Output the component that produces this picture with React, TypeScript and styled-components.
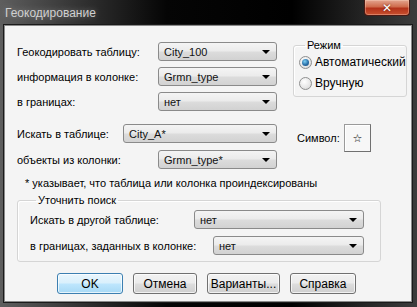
import React from "react";
import styled, { createGlobalStyle } from "styled-components";

const Global = createGlobalStyle`
  html, body { margin: 0; padding: 0; background: #000; overflow: hidden; }
  * { box-sizing: border-box; }
`;

const Window = styled.div`
  width: 417px;
  height: 307px;
  display: flex;
  flex-direction: column;
  background: linear-gradient(90deg, #5e5e5e 0%, #2c2c2c 22%, #050505 40%, #000 70%, #262626 88%, #3c3c3c 100%);
  font-family: "Liberation Sans", Arial, sans-serif;
  font-size: 11px;
  color: #000;
`;

const TitleBar = styled.div`
  height: 25px;
  display: flex;
  align-items: flex-start;
  justify-content: space-between;
  padding: 0 7px 0 5px;
`;

const Title = styled.div`
  margin-top: 6px;
  color: #d0d0d0;
  font-family: "Liberation Sans", Arial, sans-serif;
  font-size: 12px;
  text-shadow: 0 0 6px rgba(255, 255, 255, 0.35);
`;

const CloseBtn = styled.div`
  width: 46px;
  height: 16px;
  border: 1px solid #4a1a14;
  border-top: none;
  border-radius: 0 0 4px 4px;
  background: linear-gradient(180deg, #e3a58f 0%, #cf6b4c 45%, #b3321a 55%, #c9512f 100%);
  box-shadow: inset 0 0 0 1px rgba(255, 220, 200, 0.35);
  display: flex;
  align-items: center;
  justify-content: center;
  color: #fff;
  font-family: "DejaVu Sans", sans-serif;
  font-weight: bold;
  font-size: 12px;
  line-height: 1;
  text-shadow: 0 0 2px #5a1208;
`;

const Panel = styled.div`
  margin: 0 5px 5px 4px;
  flex: 1;
  background: #f4f4f4;
  border: 1px solid #8a8a8a;
  box-shadow: 0 0 0 1px #1a1a1a;
  padding: 16px 0 0 12px;
  display: flex;
  flex-direction: column;
`;

const TopSection = styled.div`
  display: flex;
  align-items: flex-start;
`;

const Column = styled.div<{ $gap: number }>`
  display: flex;
  flex-direction: column;
  gap: ${(p) => p.$gap}px;
`;

const Row = styled.div`
  display: flex;
  align-items: center;
  height: 19px;
`;

const Label = styled.div<{ $w: number }>`
  width: ${(p) => p.$w}px;
  flex: none;
  white-space: nowrap;
`;

const Select = styled.div<{ $w: number }>`
  width: ${(p) => p.$w}px;
  height: 19px;
  flex: none;
  border: 1px solid #8a8a8a;
  border-radius: 3px;
  background: linear-gradient(180deg, #f4f4f4 0%, #ebebeb 48%, #dcdcdc 52%, #d2d2d2 100%);
  display: flex;
  align-items: center;
  justify-content: space-between;
  padding: 0 6px 0 5px;
  font-size: 11px;
  color: #111;
`;

const Arrow = styled.span`
  width: 0;
  height: 0;
  border-left: 4px solid transparent;
  border-right: 4px solid transparent;
  border-top: 4px solid #000;
`;

const Group = styled.fieldset<{ $w: number; $h: number }>`
  margin: 0;
  width: ${(p) => p.$w}px;
  height: ${(p) => p.$h}px;
  border: 1px solid #d5d5d5;
  border-radius: 3px;
  box-shadow: inset 1px 1px 0 #fff;
  padding: 0;
`;

const Legend = styled.legend`
  padding: 0 2px;
  margin-left: 6px;
  font-size: 11px;
  line-height: 12px;
`;

const ModeGroup = styled(Group)`
  margin: -3px 0 0 16px;
  padding: 4px 0 0 5px;
  display: flex;
  flex-direction: column;
  gap: 7px;
`;

const RadioRow = styled.div`
  display: flex;
  align-items: center;
  gap: 3px;
  height: 14px;
  font-size: 12px;
`;

const Radio = styled.span<{ $on?: boolean }>`
  width: 13px;
  height: 13px;
  border-radius: 50%;
  border: 1px solid #8e8f8f;
  background: radial-gradient(circle at 40% 35%, #ffffff 0%, #e6e6e6 60%, #cfcfcf 100%);
  display: flex;
  align-items: center;
  justify-content: center;
  &::after {
    content: "";
    display: ${(p) => (p.$on ? "block" : "none")};
    width: 7px;
    height: 7px;
    border-radius: 50%;
    background: radial-gradient(circle at 40% 35%, #7ed0f4 0%, #2a6fa8 55%, #16466e 100%);
  }
`;

const MidSection = styled.div`
  margin-top: 13px;
  display: flex;
  align-items: flex-start;
`;

const SymbolLabel = styled.div`
  margin: 8px 0 0 20px;
  width: 47px;
`;

const SymbolBtn = styled.div`
  width: 27px;
  height: 28px;
  border: 1px solid #9a9a9a;
  border-right-color: #707070;
  border-bottom-color: #707070;
  background: #f7f7f7;
  box-shadow: inset 1px 1px 0 #fff;
  display: flex;
  align-items: center;
  justify-content: center;
  font-family: "DejaVu Sans", sans-serif;
  font-size: 11px;
`;

const Note = styled.div`
  margin: 7px 0 0 8px;
  height: 14px;
  line-height: 14px;
  white-space: nowrap;
`;

const SearchGroup = styled(Group)`
  margin: 4px 0 0 0;
  padding: 4px 0 0 12px;
  display: flex;
  flex-direction: column;
  gap: 7px;
`;

const Buttons = styled.div`
  margin: 11px 0 0 40px;
  display: flex;
  gap: 10px;
`;

const Button = styled.div<{ $w: number; $default?: boolean }>`
  width: ${(p) => p.$w}px;
  height: 21px;
  border: 1px solid ${(p) => (p.$default ? "#3c7fb1" : "#707070")};
  border-radius: 3px;
  background: ${(p) =>
    p.$default
      ? "linear-gradient(180deg, #eaf6fd 0%, #d9f0fc 48%, #bee6fd 52%, #a7d9f5 100%)"
      : "linear-gradient(180deg, #f2f2f2 0%, #ebebeb 48%, #dddddd 52%, #cfcfcf 100%)"};
  box-shadow: inset 0 0 0 1px rgba(255, 255, 255, 0.7);
  display: flex;
  align-items: center;
  justify-content: center;
  font-size: 12px;
`;

const Sel = ({ w, v }: { w: number; v: string }) => (
  <Select $w={w}>
    <span>{v}</span>
    <Arrow />
  </Select>
);

export default function App() {
  return (
    <>
      <Global />
      <Window>
        <TitleBar>
          <Title>Геокодирование</Title>
          <CloseBtn>✕</CloseBtn>
        </TitleBar>
        <Panel>
          <TopSection>
            <Column $gap={6}>
              <Row>
                <Label $w={141}>Геокодировать таблицу:</Label>
                <Sel w={119} v="City_100" />
              </Row>
              <Row>
                <Label $w={141}>информация в колонке:</Label>
                <Sel w={119} v="Grmn_type" />
              </Row>
              <Row>
                <Label $w={141}>в границах:</Label>
                <Sel w={119} v="нет" />
              </Row>
            </Column>
            <ModeGroup $w={112} $h={58}>
              <Legend>Режим</Legend>
              <RadioRow>
                <Radio $on />
                <span>Автоматический</span>
              </RadioRow>
              <RadioRow>
                <Radio />
                <span>Вручную</span>
              </RadioRow>
            </ModeGroup>
          </TopSection>
          <MidSection>
            <Column $gap={7}>
              <Row>
                <Label $w={106}>Искать в таблице:</Label>
                <Sel w={154} v="City_A*" />
              </Row>
              <Row>
                <Label $w={141}>объекты из колонки:</Label>
                <Sel w={119} v="Grmn_type*" />
              </Row>
            </Column>
            <SymbolLabel>Символ:</SymbolLabel>
            <SymbolBtn>☆</SymbolBtn>
          </MidSection>
          <Note>* указывает, что таблица или колонка проиндексированы</Note>
          <SearchGroup $w={364} $h={68}>
            <Legend>Уточнить поиск</Legend>
            <Row>
              <Label $w={164}>Искать в другой таблице:</Label>
              <Sel w={170} v="нет" />
            </Row>
            <Row>
              <Label $w={183}>в границах, заданных в колонке:</Label>
              <Sel w={151} v="нет" />
            </Row>
          </SearchGroup>
          <Buttons>
            <Button $w={66} $default>OK</Button>
            <Button $w={64}>Отмена</Button>
            <Button $w={73}>Варианты...</Button>
            <Button $w={66}>Справка</Button>
          </Buttons>
        </Panel>
      </Window>
    </>
  );
}
